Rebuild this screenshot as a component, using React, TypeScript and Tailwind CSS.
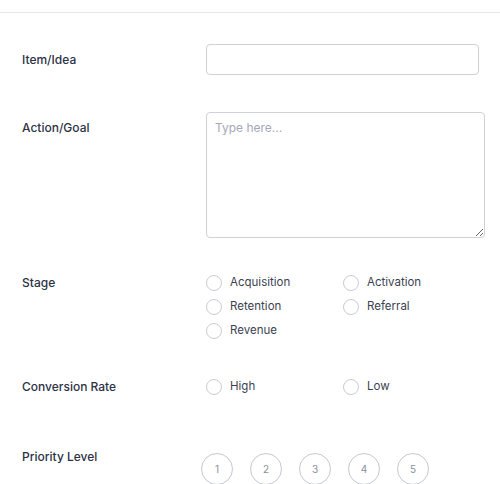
import { useState } from "react";

const stages = ["Acquisition", "Activation", "Retention", "Referral", "Revenue"];
const rates = ["High", "Low"];

function Radio({ label, name }: { label: string; name: string }) {
    return (
        <label className="flex items-center h-[24px] cursor-pointer">
            <input
                type="radio"
                name={name}
                className="appearance-none w-[16px] h-[16px] rounded-full border border-[#c9cbd6] bg-white m-0 shrink-0"
            />
            <span className="ml-[8px] text-[11.5px] text-[#3b3f51]">{label}</span>
        </label>
    );
}

export default function App() {
    const [item, setItem] = useState("");
    const [goal, setGoal] = useState("");

    return (
        <div className="w-[500px] h-[484px] overflow-hidden bg-white font-['Inter',sans-serif] text-[#2c3244]">
            <div className="h-[13px] border-b border-[#e6e7eb]" />

            <div className="pl-[22px]">
                {/* Item/Idea */}
                <div className="flex items-center mt-[31px]">
                    <div className="w-[184px] text-[12px] font-medium">Item/Idea</div>
                    <input
                        value={item}
                        onChange={(e) => setItem(e.target.value)}
                        className="w-[273px] h-[31px] rounded-[4px] border border-[#cfd1dc] px-3 text-[12px] outline-none"
                    />
                </div>

                {/* Action/Goal */}
                <div className="flex items-start mt-[37px]">
                    <div className="w-[184px] text-[12px] font-medium pt-[6px] leading-5">Action/Goal</div>
                    <textarea
                        value={goal}
                        onChange={(e) => setGoal(e.target.value)}
                        placeholder="Type here..."
                        className="w-[279px] h-[126px] rounded-[4px] border border-[#cfd1dc] px-[8px] pt-[5px] text-[12px] leading-5 outline-none placeholder:text-[#a5a8b8]"
                    />
                </div>

                {/* Stage */}
                <div className="flex items-start mt-[33px]">
                    <div className="w-[184px] text-[12px] font-medium leading-[24px]">Stage</div>
                    <div className="grid grid-cols-[137px_1fr]">
                        {stages.map((s) => (
                            <Radio key={s} label={s} name="stage" />
                        ))}
                    </div>
                </div>

                {/* Conversion Rate */}
                <div className="flex items-start mt-[32px]">
                    <div className="w-[184px] text-[12px] font-medium leading-[24px]">Conversion Rate</div>
                    <div className="grid grid-cols-[137px_1fr]">
                        {rates.map((r) => (
                            <Radio key={r} label={r} name="rate" />
                        ))}
                    </div>
                </div>

                {/* Priority Level */}
                <div className="flex items-start mt-[48px]">
                    <div className="w-[179px] text-[12px] font-medium leading-5">Priority Level</div>
                    <div className="flex gap-[17px] mt-[6px]">
                        {[1, 2, 3, 4, 5].map((n) => (
                            <button
                                key={n}
                                className="w-[32px] h-[32px] rounded-full border border-[#c5c7d3] bg-white text-[10px] text-[#8a8ea0] flex items-center justify-center"
                            >
                                {n}
                            </button>
                        ))}
                    </div>
                </div>
            </div>
        </div>
    );
}
